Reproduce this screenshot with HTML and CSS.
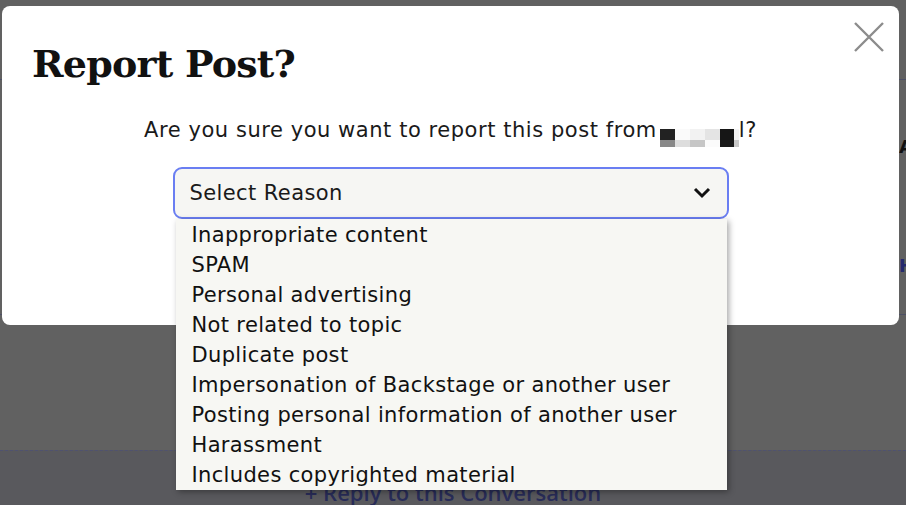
FILE: index.html
```html
<!DOCTYPE html>
<html>
<head>
<meta charset="utf-8">
<link rel="stylesheet" href="styles.css">
</head>
<body>
<div class="page">
  <div class="page-top">
    <div class="rule rule-1"></div>
    <div class="side-glyph side-a">A</div>
    <div class="side-glyph side-h">H</div>
    <div class="rule rule-2"></div>
  </div>
  <div class="reply-band">
    <span class="reply-link">+ Reply to this Conversation</span>
  </div>
</div>

<div class="modal">
  <button class="close" aria-label="Close">
    <svg width="32" height="32" viewBox="0 0 32 32"><path d="M2 2 L30 30 M30 2 L2 30" stroke="#8c8c8c" stroke-width="2.4" fill="none"/></svg>
  </button>
  <h1 class="title">Report Post?</h1>
  <p class="question">Are you sure you want to report this post from<span class="blur"><span class="px c1"></span><span class="px c2"></span><span class="px c3"></span><span class="px c4"></span><span class="px c5"></span><span class="px c6"></span><span class="px b1"></span><span class="px b2"></span><span class="px b3"></span><span class="px b4"></span><span class="px b5"></span><span class="px b6"></span></span>l?</p>
  <div class="select-wrap">
    <div class="select">
      <span>Select Reason</span>
      <svg class="chev" width="18" height="12" viewBox="0 0 18 12"><path d="M2 2 L9 9 L16 2" stroke="#111" stroke-width="3" fill="none"/></svg>
    </div>
    <ul class="options">
      <li>Inappropriate content</li>
      <li>SPAM</li>
      <li>Personal advertising</li>
      <li>Not related to topic</li>
      <li>Duplicate post</li>
      <li>Impersonation of Backstage or another user</li>
      <li>Posting personal information of another user</li>
      <li>Harassment</li>
      <li>Includes copyrighted material</li>
    </ul>
  </div>
</div>
</body>
</html>
```

FILE: styles.css
```css
html, body {
  margin: 0;
  padding: 0;
  width: 906px;
  height: 505px;
  overflow: hidden;
  font-family: "DejaVu Sans", "Liberation Sans", sans-serif;
}
body { position: relative; background: #616161; }

.page {
  height: 505px;
  display: flex;
  flex-direction: column;
}
.page-top {
  flex: 1;
  position: relative;
}
.rule { position: absolute; left: 0; right: 0; height: 1px; background: #4d5066; }
.rule-1 { top: 79px; }
.rule-2 { top: 314px; }
.side-glyph { position: absolute; left: 899px; font-size: 18px; font-weight: 700; }
.side-a { top: 136px; color: #111; }
.side-h { top: 255px; color: #252a6e; }

.reply-band {
  height: 54px;
  border-top: 1px dashed #4f5270;
  background: #59595d;
  display: flex;
  justify-content: center;
}
.reply-link {
  margin-top: 26px;
  font-family: "Open Sans", sans-serif;
  font-size: 22px;
  font-weight: 600;
  color: #282c58;
}

.modal {
  position: absolute;
  left: 2px;
  top: 6px;
  width: 897px;
  height: 319px;
  background: #fff;
  border-radius: 8px;
  box-sizing: border-box;
  padding: 34px 30px 0 30px;
}
.close {
  position: absolute;
  right: 14px;
  top: 15px;
  width: 32px;
  height: 32px;
  padding: 0;
  border: 0;
  background: none;
}
.close svg { display: block; }
.title {
  margin: 0;
  font-family: "DejaVu Serif", serif;
  font-weight: 700;
  font-size: 38px;
  line-height: 48px;
  letter-spacing: -0.8px;
  color: #111;
}
.question {
  margin: 28px 0 0;
  text-align: center;
  font-size: 21px;
  line-height: 28px;
  letter-spacing: 0.55px;
  color: #1a1a1a;
}
.blur {
  display: inline-grid;
  grid-template-columns: 15px 15px 15px 15px 14px 5px;
  grid-template-rows: 11px 7px;
  vertical-align: -3px;
  margin-left: 3px;
}
.c1 { background: #222; } .c2 { background: #fafafa; } .c3 { background: #f2f2f2; }
.c4 { background: #e4e4e4; } .c5 { background: #161616; } .c6 { background: #f4f4f4; }
.b1 { background: #888; } .b2 { background: #ddd; } .b3 { background: #c6c6c6; }
.b4 { background: #fbfbfb; } .b5 { background: #1a1a1a; } .b6 { background: #c8c8c8; }

.select-wrap {
  position: relative;
  width: 556px;
  margin: 20px auto 0;
}
.select {
  height: 52px;
  box-sizing: border-box;
  border: 2px solid #6a7ef2;
  border-radius: 9px;
  background: #f6f6f3;
  display: flex;
  align-items: center;
  justify-content: space-between;
  padding: 0 16px 0 15px;
  font-size: 21px;
  letter-spacing: 0.4px;
  color: #1a1a1a;
}
.options {
  position: absolute;
  left: 3px;
  top: 52px;
  width: 551px;
  margin: 0;
  padding: 1px 0 0;
  list-style: none;
  background: #f7f7f3;
  box-shadow: 2px 2px 6px rgba(0,0,0,0.35);
}
.options li {
  height: 30px;
  line-height: 30px;
  padding-left: 16px;
  font-size: 21px;
  letter-spacing: 0.35px;
  color: #111;
  white-space: nowrap;
}
```
